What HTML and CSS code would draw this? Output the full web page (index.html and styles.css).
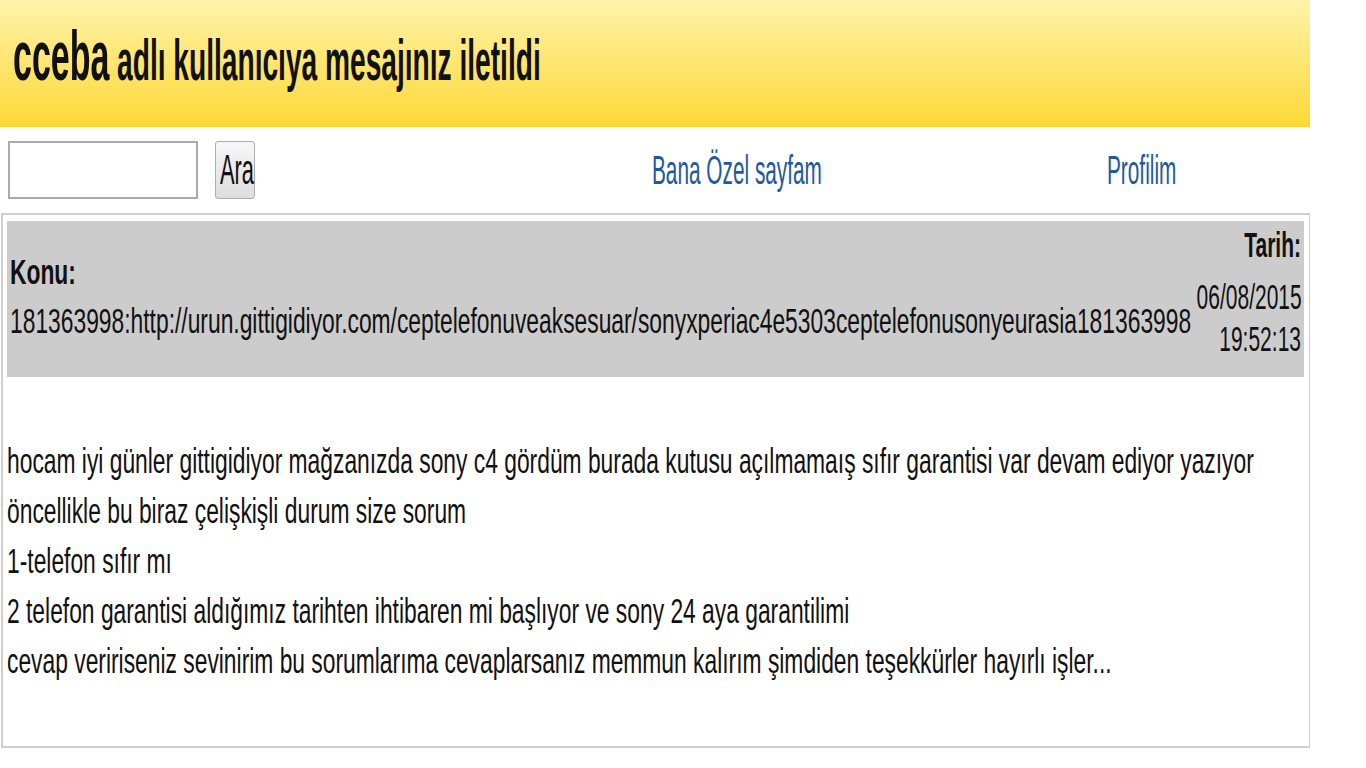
FILE: index.html
```html
<!DOCTYPE html>
<html lang="tr">
<head>
  <meta charset="UTF-8">
  <title>Mesaj iletildi</title>
  <link rel="stylesheet" href="styles.css">
</head>
<body>
  <div class="page">
    <!-- BASLIK -->
    <div class="header">
      <h1><span class="user">cceba</span> adlı kullanıcıya mesajınız iletildi</h1>
    </div>

    <!-- ARAMA / LINKLER -->
    <div class="toolbar">
      <input type="text" class="search">
      <button class="btn"><span class="sq">Ara</span></button>
      <a href="#" class="nav nav-home"><span class="sq">Bana Özel sayfam</span></a>
      <a href="#" class="nav nav-profile"><span class="sq">Profilim</span></a>
    </div>

    <!-- MESAJ -->
    <div class="message">
      <div class="meta">
        <div class="subject">
          <div class="squeeze">
            <b>Konu:</b><br>
            181363998:http://urun.gittigidiyor.com/ceptelefonuveaksesuar/sonyxperiac4e5303ceptelefonusonyeurasia181363998
          </div>
        </div>
        <div class="date">
          <div class="squeeze-right">
            <div class="date-label"><b>Tarih:</b></div>
            <div class="date-day">06/08/2015</div>
            <div class="date-time">19:52:13</div>
          </div>
        </div>
      </div>
      <div class="body">
        <div class="squeeze">
          hocam iyi günler gittigidiyor mağzanızda sony c4 gördüm burada kutusu açılmamaış sıfır garantisi var devam ediyor yazıyor<br>
          öncellikle bu biraz çelişkişli durum size sorum<br>
          1-telefon sıfır mı<br>
          2 telefon garantisi aldığımız tarihten ihtibaren mi başlıyor ve sony 24 aya garantilimi<br>
          cevap veririseniz sevinirim bu sorumlarıma cevaplarsanız memmun kalırım şimdiden teşekkürler hayırlı işler...
        </div>
      </div>
    </div>
  </div>
</body>
</html>
```

FILE: styles.css
```css
body {
  margin: 0;
  background: #fff;
  font-family: "Liberation Sans", Arial, sans-serif;
  color: #111;
}
.page {
  width: 1310px;
}

/* yazilar yatayda sikistirilmis gorunuyor */
.sq {
  display: inline-block;
  white-space: nowrap;
  transform: scaleX(0.52);
  transform-origin: left center;
}
.squeeze {
  width: 153.4%;
  white-space: nowrap;
  transform: scaleX(0.652);
  transform-origin: left top;
}

.header {
  height: 127px;
  box-sizing: border-box;
  padding: 21px 0 0 13px;
  background: linear-gradient(to bottom, #fff3ab, #fdd835);
}
.header h1 {
  display: inline-block;
  margin: 0;
  font-size: 58px;
  line-height: 70px;
  font-weight: bold;
  white-space: nowrap;
  color: #111;
  transform: scaleX(0.485);
  transform-origin: left top;
}
.header .user {
  font-size: 70px;
}

.toolbar {
  height: 86px;
  display: flex;
  align-items: center;
}
.search {
  margin: 0 0 0 8px;
  width: 190px;
  height: 58px;
  box-sizing: border-box;
  border: 2px solid #ababab;
  background: #fff;
}
.btn {
  margin-left: 17px;
  width: 40px;
  height: 58px;
  padding: 0 0 0 4px;
  text-align: left;
  border: 1px solid #adadad;
  border-radius: 3px;
  background: linear-gradient(to bottom, #f7f7f7, #dddddd);
  font-family: inherit;
  font-size: 42px;
  color: #111;
  overflow: visible;
}
.nav {
  width: 170px;
  font-size: 40px;
  color: #2158a0;
  text-decoration: none;
  white-space: nowrap;
}
.nav-home {
  margin-left: 397px;
}
.nav-profile {
  margin-left: 285px;
}

.message {
  margin-left: 1px;
  width: 1309px;
  height: 535px;
  box-sizing: border-box;
  border: 2px solid #cfcfcf;
  border-right-width: 1px;
  padding: 6px 5px 0 4px;
  overflow: hidden;
}
.meta {
  height: 156px;
  display: flex;
  background: #cccccc;
}
.subject {
  flex: 1;
  min-width: 0;
  padding: 26px 0 0 3px;
  font-size: 35px;
  line-height: 49px;
}
.date {
  width: 104px;
  padding: 3px 3px 0 0;
  font-size: 35px;
  line-height: 42px;
}
.squeeze-right {
  width: 174px;
  margin-left: -70px;
  text-align: right;
  white-space: nowrap;
  transform: scaleX(0.6);
  transform-origin: right top;
}
.date-day {
  margin-top: 10px;
}
.body {
  padding: 59px 0 0 0;
  font-size: 35px;
  line-height: 50px;
}
```
